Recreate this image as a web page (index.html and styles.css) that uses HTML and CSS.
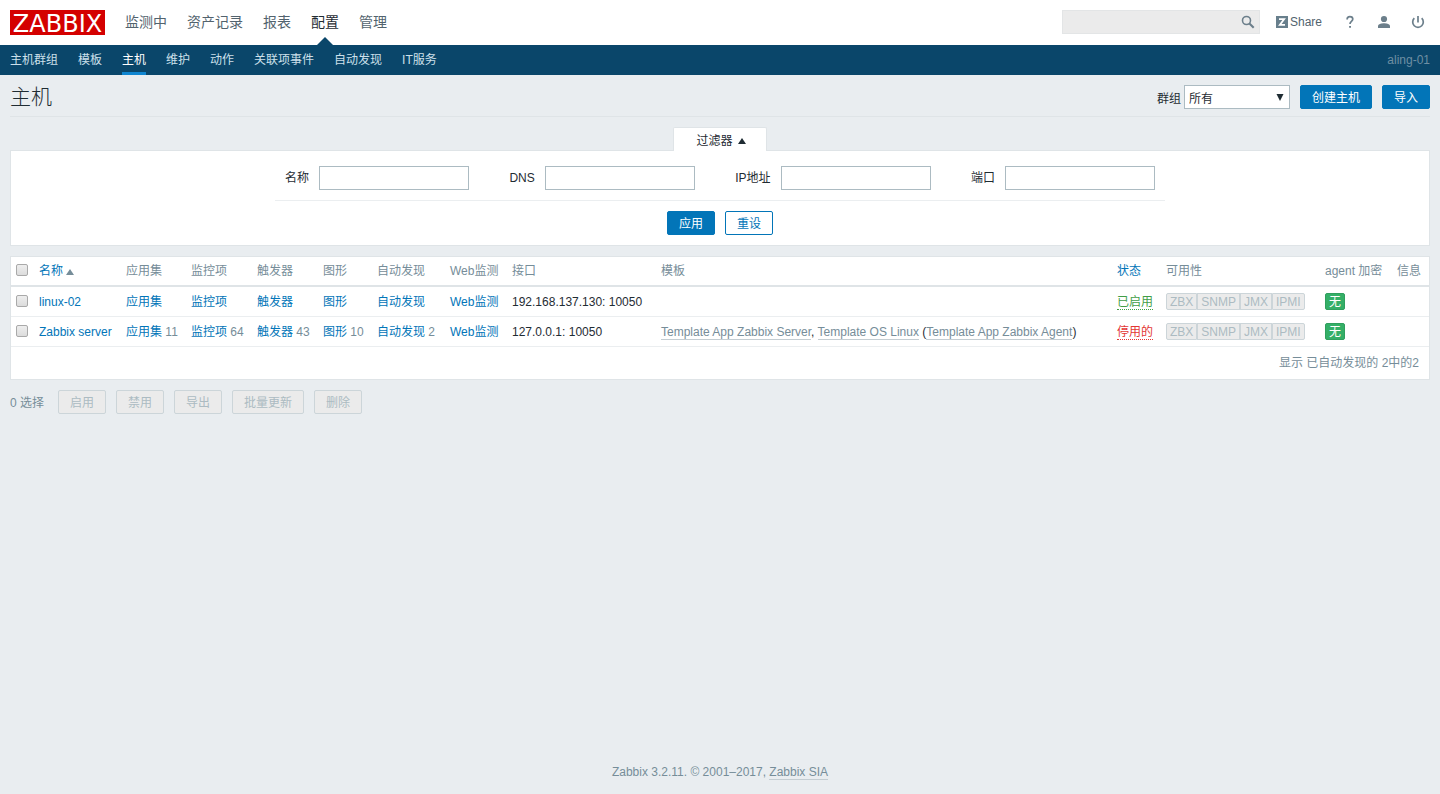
FILE: index.html
```html
<!DOCTYPE html>
<html lang="zh-CN">
<head>
<meta charset="utf-8">
<title>主机</title>
<link rel="stylesheet" href="styles.css">
</head>
<body>
<header class="top">
  <a class="logo" href="#">ZABBIX</a>
  <nav class="menu">
    <a href="#">监测中</a>
    <a href="#">资产记录</a>
    <a href="#">报表</a>
    <a href="#" class="selected">配置</a>
    <a href="#">管理</a>
  </nav>
  <div class="tools">
    <form class="search">
      <input type="text" aria-label="搜索">
      <button type="button" aria-label="搜索"><svg width="14" height="14" viewBox="0 0 14 14" fill="none" stroke="#6c7f8b"><circle cx="5.5" cy="5.5" r="4" stroke-width="1.6"/><path d="M8.4 8.4L12.7 12.7" stroke-width="2.1"/></svg></button>
    </form>
    <a class="share" href="#"><svg width="12" height="12" viewBox="0 0 12 12"><path fill="#687f8c" d="M0 0h12v12H0z"/><path fill="none" stroke="#fff" stroke-width="1.7" d="M3 3.1h5.2L3.8 8.9H9"/></svg><span>Share</span></a>
    <a class="icon" href="#" aria-label="帮助"><svg width="14" height="14" viewBox="0 0 14 14"><path fill="none" stroke="#6c7f8b" stroke-width="1.7" d="M4.1 4.4C4.1 2.3 5.3 1.6 6.9 1.6s2.9.8 2.9 2.5c0 2.3-2.8 2.4-2.8 4.9"/><path fill="#6c7f8b" d="M6.1 10.9h1.9v1.9H6.1z"/></svg></a>
    <a class="icon" href="#" aria-label="用户"><svg width="14" height="14" viewBox="0 0 14 14" fill="#6c7f8b"><circle cx="7" cy="4" r="3.1"/><path d="M1 13v-1.9C1 9 4.5 8.2 7 8.2s6 .8 6 2.9V13z"/></svg></a>
    <a class="icon" href="#" aria-label="退出"><svg width="14" height="14" viewBox="0 0 14 14" fill="none" stroke="#6c7f8b" stroke-width="1.7"><path d="M7 1v6.5M3.3 3.2a5.3 5.3 0 1 0 7.4 0"/></svg></a>
  </div>
</header>
<nav class="submenu">
  <a href="#">主机群组</a>
  <a href="#">模板</a>
  <a href="#" class="selected">主机</a>
  <a href="#">维护</a>
  <a href="#">动作</a>
  <a href="#">关联项事件</a>
  <a href="#">自动发现</a>
  <a href="#">IT服务</a>
  <span class="server">aling-01</span>
</nav>
<main>
  <div class="title">
    <h1>主机</h1>
    <form class="actions">
      <label for="group">群组</label>
      <div class="select">
        <select id="group"><option>所有</option></select>
        <svg width="8" height="7" viewBox="0 0 8 7"><path d="M.5 0h7L4 7z" fill="#1f2c33"/></svg>
      </div>
      <button type="button" class="btn">创建主机</button>
      <button type="button" class="btn">导入</button>
    </form>
  </div>
  <button type="button" class="tab">过滤器 <svg width="8" height="6" viewBox="0 0 8 6"><path d="M4 0l4 6H0z" fill="#1f2c33"/></svg></button>
  <form class="filter">
    <div class="fields">
      <div class="field"><label for="f-name">名称</label><input id="f-name" type="text"></div>
      <div class="field"><label for="f-dns">DNS</label><input id="f-dns" type="text"></div>
      <div class="field"><label for="f-ip">IP地址</label><input id="f-ip" type="text"></div>
      <div class="field"><label for="f-port">端口</label><input id="f-port" type="text"></div>
    </div>
    <div class="filter-buttons">
      <button type="button" class="btn">应用</button>
      <button type="button" class="btn alt">重设</button>
    </div>
  </form>
  <div class="list">
    <table>
      <colgroup><col class="c-check"><col class="c-name"><col class="c-apps"><col class="c-count"><col class="c-count"><col class="c-graph"><col class="c-disc"><col class="c-web"><col class="c-iface"><col><col class="c-status"><col class="c-avail"><col class="c-enc"><col class="c-info"></colgroup>
      <thead>
        <tr><th><input type="checkbox" aria-label="全选"></th><th><a href="#">名称 <svg class="sort" width="8" height="6" viewBox="0 0 8 6"><path d="M4 0l4 6H0z" fill="#768d99"/></svg></a></th><th>应用集</th><th>监控项</th><th>触发器</th><th>图形</th><th>自动发现</th><th>Web监测</th><th>接口</th><th>模板</th><th><a href="#">状态</a></th><th>可用性</th><th>agent 加密</th><th>信息</th></tr>
      </thead>
      <tbody>
        <tr><td><input type="checkbox" aria-label="linux-02"></td><td><a href="#">linux-02</a></td><td><a href="#">应用集</a></td><td><a href="#">监控项</a></td><td><a href="#">触发器</a></td><td><a href="#">图形</a></td><td><a href="#">自动发现</a></td><td><a href="#">Web监测</a></td><td>192.168.137.130: 10050</td><td></td><td><a class="state on" href="#">已启用</a></td><td><div class="avail"><span>ZBX</span><span>SNMP</span><span>JMX</span><span>IPMI</span></div></td><td><span class="enc">无</span></td><td></td></tr>
        <tr><td><input type="checkbox" aria-label="Zabbix server"></td><td><a href="#">Zabbix server</a></td><td><a href="#">应用集</a> <sup>11</sup></td><td><a href="#">监控项</a> <sup>64</sup></td><td><a href="#">触发器</a> <sup>43</sup></td><td><a href="#">图形</a> <sup>10</sup></td><td><a href="#">自动发现</a> <sup>2</sup></td><td><a href="#">Web监测</a></td><td>127.0.0.1: 10050</td><td><a class="grey" href="#">Template App Zabbix Server</a>, <a class="grey" href="#">Template OS Linux</a> (<a class="grey" href="#">Template App Zabbix Agent</a>)</td><td><a class="state off" href="#">停用的</a></td><td><div class="avail"><span>ZBX</span><span>SNMP</span><span>JMX</span><span>IPMI</span></div></td><td><span class="enc">无</span></td><td></td></tr>
      </tbody>
    </table>
    <div class="stats">显示 已自动发现的 2中的2</div>
  </div>
  <div class="bulk">
    <span class="count">0 选择</span>
    <button type="button" class="btn" disabled>启用</button>
    <button type="button" class="btn" disabled>禁用</button>
    <button type="button" class="btn" disabled>导出</button>
    <button type="button" class="btn" disabled>批量更新</button>
    <button type="button" class="btn" disabled>删除</button>
  </div>
</main>
<footer>Zabbix 3.2.11. © 2001–2017, <a class="grey" href="#">Zabbix SIA</a></footer>
</body>
</html>
```
FILE: styles.css
```css
* { box-sizing: border-box; }
body {
  margin: 0;
  min-height: 100vh;
  display: flex;
  flex-direction: column;
  background: #e9edf0;
  color: #1f2c33;
  font: 12px/16px "Liberation Sans", "Noto Sans CJK SC", sans-serif;
}
a { color: #0275b8; text-decoration: none; }
button, input, select { font: inherit; color: inherit; margin: 0; }
svg { display: block; }

.top { display: flex; align-items: center; height: 45px; padding: 0 10px; background: #fff; }
.logo {
  width: 95px;
  height: 25px;
  background: #d40000;
  color: #fff;
  font: 24px/28px "DejaVu Sans", sans-serif;
  text-align: center;
}
.menu { display: flex; gap: 20px; margin-left: 20px; font-size: 14px; line-height: 45px; }
.menu a { color: #52636e; }
.menu .selected { position: relative; color: #1f2c33; }
.menu .selected::after {
  content: "";
  position: absolute;
  left: 50%;
  bottom: 0;
  margin-left: -8px;
  border: 8px solid transparent;
  border-top: 0;
  border-bottom-color: #0a466a;
}
.tools { display: flex; align-items: center; margin-left: auto; padding: 0 5px 1px 0; }
.search { position: relative; }
.search input { display: block; width: 198px; height: 24px; padding: 0 26px 0 5px; background: #ebebeb; border: 1px solid #e3e5e6; }
.search button { position: absolute; top: 5px; right: 5px; padding: 0; border: 0; background: none; }
.share { display: flex; align-items: center; gap: 2px; margin: 0 21px 0 16px; color: #52636e; }
.icon + .icon { margin-left: 20px; }

.submenu { display: flex; gap: 20px; padding: 0 10px; background: #0a466a; line-height: 30px; }
.submenu a { color: #cde0eb; }
.submenu .selected { color: #fff; box-shadow: inset 0 -3px #0f85d0; }
.server { margin-left: auto; color: #6e8fa3; }

main { padding: 0 10px; }
.title { display: flex; align-items: center; justify-content: space-between; height: 42px; margin-bottom: 10px; border-bottom: 1px solid #dfe4e7; padding-top: 3px; }
h1 { margin: 0; font-size: 21px; font-weight: 300; line-height: 32px; }
.actions { display: flex; align-items: center; gap: 10px; }
.actions label { margin-right: -7px; padding-top: 3px; }
.select { position: relative; }
.select select { display: block; appearance: none; width: 106px; height: 24px; padding: 3px 4px 0; background: #fff; border: 1px solid #acbbc2; border-radius: 0; }
.select svg { position: absolute; right: 6px; top: 9px; pointer-events: none; }

.btn { height: 24px; padding: 1px 11px 0; border: 1px solid #0275b8; border-radius: 2px; background: #0275b8; color: #fff; line-height: 22px; }
.btn.alt { background: #fff; color: #0275b8; }
.btn:disabled { background: #ebebeb; border-color: #ccd5d9; color: #acbbc2; }

.tab { position: relative; display: flex; align-items: center; justify-content: center; gap: 5px; width: 94px; height: 24px; margin: 0 auto -1px; padding: 3px 0 0 2px; border: 1px solid #dfe4e7; border-bottom: 0; border-radius: 2px 2px 0 0; background: #fff; }
.filter { padding: 15px 0 10px; background: #fff; border: 1px solid #dfe4e7; }
.fields { display: flex; justify-content: space-between; max-width: 890px; margin: 0 auto; padding: 0 10px 10px; border-bottom: 1px solid #ebeef0; }
.field { display: flex; align-items: center; gap: 10px; }
.field input { width: 150px; height: 24px; padding: 0 4px; border: 1px solid #acbbc2; background: #fff; }
.filter-buttons { display: flex; justify-content: center; gap: 10px; padding-top: 10px; }

.list { margin-top: 10px; background: #fff; border: 1px solid #dfe4e7; }
table { width: 100%; border-collapse: separate; border-spacing: 0; table-layout: fixed; }
th, td { height: 30px; padding: 0 5px; text-align: left; font-weight: 400; white-space: nowrap; vertical-align: middle; border-bottom: 1px solid #ebeef0; }
th { color: #768d99; border-bottom: 2px solid #dfe4e7; }
.c-check { width: 23px; }
.c-name { width: 87px; }
.c-apps { width: 65px; }
.c-count { width: 66px; }
.c-graph { width: 54px; }
.c-disc { width: 73px; }
.c-web { width: 62px; }
.c-iface { width: 149px; }
.c-status { width: 49px; }
.c-avail { width: 159px; }
.c-enc { width: 72px; }
.c-info { width: 37px; }
.sort { display: inline-block; }
sup { font-size: 12px; line-height: 16px; vertical-align: baseline; color: #768d99; }
input[type="checkbox"] { display: block; appearance: none; width: 12px; height: 12px; margin-bottom: 2px; border: 1px solid #a9a9a9; border-radius: 2px; background: linear-gradient(#eee, #dcdcdc); }
.grey { color: #768d99; border-bottom: 1px solid #c4cdd2; }
.state { display: block; width: max-content; height: 17px; line-height: 18px; border-bottom: 1px dotted; }
.on { color: #429e47; border-color: #429e47; }
.off { color: #e33734; border-color: #e33734; }
.avail { display: flex; }
.avail span, .enc { height: 17px; padding: 0 3px; line-height: 16px; border: 1px solid #ccd5d9; }
.avail span { background: #ebebeb; color: #acbbc2; }
.avail span:first-child { border-radius: 2px 0 0 2px; }
.avail span:last-child { border-radius: 0 2px 2px 0; }
.enc { display: block; width: 20px; border-color: #2f9f5e; border-radius: 2px; background: #34af67; color: #fff; }
.stats { padding: 0 10px; color: #768d99; line-height: 32px; text-align: right; }

.bulk { display: flex; align-items: center; gap: 10px; margin-top: 10px; color: #768d99; }
.count { margin-right: 4px; padding-top: 2px; }
footer { margin-top: auto; padding: 20px 10px 14px; color: #768d99; text-align: center; }
```
